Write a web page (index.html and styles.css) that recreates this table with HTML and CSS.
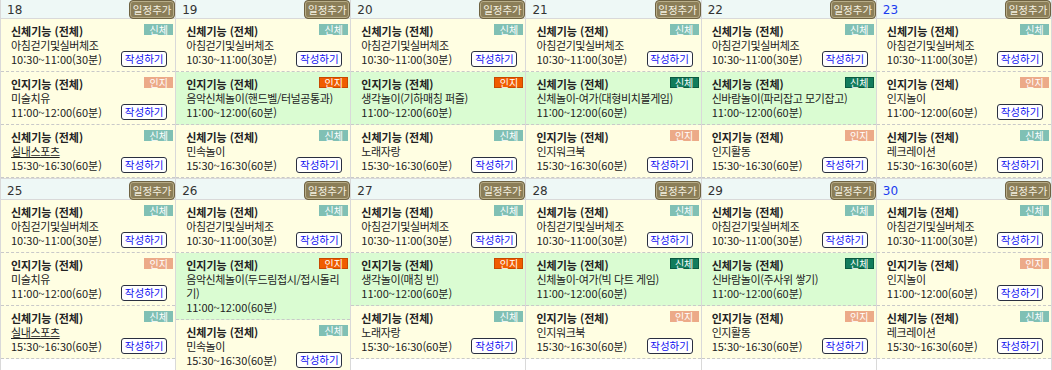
FILE: index.html
```html
<!DOCTYPE html>
<html lang="ko">
<head>
<meta charset="utf-8">
<link rel="stylesheet" href="styles.css">
</head>
<body>
<table class="cal">
<tr>
<td>
  <div class="head"><span class="num">18</span><span class="add">일정추가</span></div>
  <div class="ev"><span class="tag body">신체</span><div class="title">신체기능 (전체)</div><div class="name">아침걷기및실버체조</div><div class="time"><span>10:30~11:00(30분)</span><span class="write">작성하기</span></div></div>
  <div class="ev"><span class="tag cog">인지</span><div class="title">인지기능 (전체)</div><div class="name">미술치유</div><div class="time"><span>11:00~12:00(60분)</span><span class="write">작성하기</span></div></div>
  <div class="ev"><span class="tag body">신체</span><div class="title">신체기능 (전체)</div><div class="name u">실내스포츠</div><div class="time"><span>15:30~16:30(60분)</span><span class="write">작성하기</span></div></div>
</td>
<td>
  <div class="head"><span class="num">19</span><span class="add">일정추가</span></div>
  <div class="ev"><span class="tag body">신체</span><div class="title">신체기능 (전체)</div><div class="name">아침걷기및실버체조</div><div class="time"><span>10:30~11:00(30분)</span><span class="write">작성하기</span></div></div>
  <div class="ev done"><span class="tag cog-on">인지</span><div class="title">인지기능 (전체)</div><div class="name">음악신체놀이(핸드벨/터널공통과)</div><div class="time"><span>11:00~12:00(60분)</span></div></div>
  <div class="ev"><span class="tag body">신체</span><div class="title">신체기능 (전체)</div><div class="name">민속놀이</div><div class="time"><span>15:30~16:30(60분)</span><span class="write">작성하기</span></div></div>
</td>
<td>
  <div class="head"><span class="num">20</span><span class="add">일정추가</span></div>
  <div class="ev"><span class="tag body">신체</span><div class="title">신체기능 (전체)</div><div class="name">아침걷기및실버체조</div><div class="time"><span>10:30~11:00(30분)</span><span class="write">작성하기</span></div></div>
  <div class="ev done"><span class="tag cog-on">인지</span><div class="title">인지기능 (전체)</div><div class="name">생각놀이(기하매칭 퍼즐)</div><div class="time"><span>11:00~12:00(60분)</span></div></div>
  <div class="ev"><span class="tag body">신체</span><div class="title">신체기능 (전체)</div><div class="name">노래자랑</div><div class="time"><span>15:30~16:30(60분)</span><span class="write">작성하기</span></div></div>
</td>
<td>
  <div class="head"><span class="num">21</span><span class="add">일정추가</span></div>
  <div class="ev"><span class="tag body">신체</span><div class="title">신체기능 (전체)</div><div class="name">아침걷기및실버체조</div><div class="time"><span>10:30~11:00(30분)</span><span class="write">작성하기</span></div></div>
  <div class="ev done"><span class="tag body-on">신체</span><div class="title">신체기능 (전체)</div><div class="name">신체놀이-여가(대형비치볼게임)</div><div class="time"><span>11:00~12:00(60분)</span></div></div>
  <div class="ev"><span class="tag cog">인지</span><div class="title">인지기능 (전체)</div><div class="name">인지워크북</div><div class="time"><span>15:30~16:30(60분)</span><span class="write">작성하기</span></div></div>
</td>
<td>
  <div class="head"><span class="num">22</span><span class="add">일정추가</span></div>
  <div class="ev"><span class="tag body">신체</span><div class="title">신체기능 (전체)</div><div class="name">아침걷기및실버체조</div><div class="time"><span>10:30~11:00(30분)</span><span class="write">작성하기</span></div></div>
  <div class="ev done"><span class="tag body-on">신체</span><div class="title">신체기능 (전체)</div><div class="name">신바람놀이(파리잡고 모기잡고)</div><div class="time"><span>11:00~12:00(60분)</span></div></div>
  <div class="ev"><span class="tag cog">인지</span><div class="title">인지기능 (전체)</div><div class="name">인지활동</div><div class="time"><span>15:30~16:30(60분)</span><span class="write">작성하기</span></div></div>
</td>
<td>
  <div class="head"><span class="num sat">23</span><span class="add">일정추가</span></div>
  <div class="ev"><span class="tag body">신체</span><div class="title">신체기능 (전체)</div><div class="name">아침걷기및실버체조</div><div class="time"><span>10:30~11:00(30분)</span><span class="write">작성하기</span></div></div>
  <div class="ev"><span class="tag cog">인지</span><div class="title">인지기능 (전체)</div><div class="name">인지놀이</div><div class="time"><span>11:00~12:00(60분)</span><span class="write">작성하기</span></div></div>
  <div class="ev"><span class="tag body">신체</span><div class="title">신체기능 (전체)</div><div class="name">레크레이션</div><div class="time"><span>15:30~16:30(60분)</span><span class="write">작성하기</span></div></div>
</td>
</tr>
<tr>
<td>
  <div class="head"><span class="num">25</span><span class="add">일정추가</span></div>
  <div class="ev"><span class="tag body">신체</span><div class="title">신체기능 (전체)</div><div class="name">아침걷기및실버체조</div><div class="time"><span>10:30~11:00(30분)</span><span class="write">작성하기</span></div></div>
  <div class="ev"><span class="tag cog">인지</span><div class="title">인지기능 (전체)</div><div class="name">미술치유</div><div class="time"><span>11:00~12:00(60분)</span><span class="write">작성하기</span></div></div>
  <div class="ev"><span class="tag body">신체</span><div class="title">신체기능 (전체)</div><div class="name u">실내스포츠</div><div class="time"><span>15:30~16:30(60분)</span><span class="write">작성하기</span></div></div>
</td>
<td>
  <div class="head"><span class="num">26</span><span class="add">일정추가</span></div>
  <div class="ev"><span class="tag body">신체</span><div class="title">신체기능 (전체)</div><div class="name">아침걷기및실버체조</div><div class="time"><span>10:30~11:00(30분)</span><span class="write">작성하기</span></div></div>
  <div class="ev done"><span class="tag cog-on">인지</span><div class="title">인지기능 (전체)</div><div class="name">음악신체놀이(두드림접시/접시돌리기)</div><div class="time"><span>11:00~12:00(60분)</span></div></div>
  <div class="ev"><span class="tag body">신체</span><div class="title">신체기능 (전체)</div><div class="name">민속놀이</div><div class="time"><span>15:30~16:30(60분)</span><span class="write">작성하기</span></div></div>
</td>
<td>
  <div class="head"><span class="num">27</span><span class="add">일정추가</span></div>
  <div class="ev"><span class="tag body">신체</span><div class="title">신체기능 (전체)</div><div class="name">아침걷기및실버체조</div><div class="time"><span>10:30~11:00(30분)</span><span class="write">작성하기</span></div></div>
  <div class="ev done"><span class="tag cog-on">인지</span><div class="title">인지기능 (전체)</div><div class="name">생각놀이(매칭 빈)</div><div class="time"><span>11:00~12:00(60분)</span></div></div>
  <div class="ev"><span class="tag body">신체</span><div class="title">신체기능 (전체)</div><div class="name">노래자랑</div><div class="time"><span>15:30~16:30(60분)</span><span class="write">작성하기</span></div></div>
</td>
<td>
  <div class="head"><span class="num">28</span><span class="add">일정추가</span></div>
  <div class="ev"><span class="tag body">신체</span><div class="title">신체기능 (전체)</div><div class="name">아침걷기및실버체조</div><div class="time"><span>10:30~11:00(30분)</span><span class="write">작성하기</span></div></div>
  <div class="ev done"><span class="tag body-on">신체</span><div class="title">신체기능 (전체)</div><div class="name">신체놀이-여가(빅 다트 게임)</div><div class="time"><span>11:00~12:00(60분)</span></div></div>
  <div class="ev"><span class="tag cog">인지</span><div class="title">인지기능 (전체)</div><div class="name">인지워크북</div><div class="time"><span>15:30~16:30(60분)</span><span class="write">작성하기</span></div></div>
</td>
<td>
  <div class="head"><span class="num">29</span><span class="add">일정추가</span></div>
  <div class="ev"><span class="tag body">신체</span><div class="title">신체기능 (전체)</div><div class="name">아침걷기및실버체조</div><div class="time"><span>10:30~11:00(30분)</span><span class="write">작성하기</span></div></div>
  <div class="ev done"><span class="tag body-on">신체</span><div class="title">신체기능 (전체)</div><div class="name">신바람놀이(주사위 쌓기)</div><div class="time"><span>11:00~12:00(60분)</span></div></div>
  <div class="ev"><span class="tag cog">인지</span><div class="title">인지기능 (전체)</div><div class="name">인지활동</div><div class="time"><span>15:30~16:30(60분)</span><span class="write">작성하기</span></div></div>
</td>
<td>
  <div class="head"><span class="num sat">30</span><span class="add">일정추가</span></div>
  <div class="ev"><span class="tag body">신체</span><div class="title">신체기능 (전체)</div><div class="name">아침걷기및실버체조</div><div class="time"><span>10:30~11:00(30분)</span><span class="write">작성하기</span></div></div>
  <div class="ev"><span class="tag cog">인지</span><div class="title">인지기능 (전체)</div><div class="name">인지놀이</div><div class="time"><span>11:00~12:00(60분)</span><span class="write">작성하기</span></div></div>
  <div class="ev"><span class="tag body">신체</span><div class="title">신체기능 (전체)</div><div class="name">레크레이션</div><div class="time"><span>15:30~16:30(60분)</span><span class="write">작성하기</span></div></div>
</td>
</tr>
</table>
</body>
</html>
```

FILE: styles.css
```css
html, body {
  margin: 0;
  padding: 0;
  background: #fff;
}
body {
  font-family: "Noto Sans CJK KR", "Noto Sans", sans-serif;
  font-size: 11px;
  color: #222;
  overflow: hidden;
}
.cal {
  width: 1052px;
  table-layout: fixed;
  border-collapse: collapse;
  margin-top: -3px;
}
.cal td {
  border: 1px solid #d9d9d9;
  padding: 0;
  vertical-align: top;
}
.head {
  height: 20px;
  display: flex;
  justify-content: space-between;
  align-items: flex-start;
  background: #eef8f6;
  border-bottom: 1px solid #d9d9d9;
}
.num {
  font-family: "DejaVu Sans", sans-serif;
  font-size: 12px;
  color: #333;
  padding: 6px 0 0 6px;
  line-height: 12px;
}
.num.sat { color: #1a3cf0; }
.add {
  box-sizing: border-box;
  width: 46px;
  height: 19px;
  margin-top: 2px;
  background: #8b7e58;
  color: #f4f0e0;
  border: 1px solid #6e6242;
  box-shadow: inset 0 0 0 1px #b8ad88;
  border-radius: 4px;
  font-size: 10.5px;
  line-height: 17px;
  text-align: center;
}
.ev {
  position: relative;
  padding: 5px 8px 4px 10px;
  background: #fffee2;
  border-bottom: 1px dashed #c9c9c9;
  line-height: 14px;
}
.ev.done { background: #dafcd2; }
.title { font-weight: bold; }
.name { letter-spacing: -0.4px; }
.name.u { text-decoration: underline; }
.time {
  display: flex;
  justify-content: space-between;
  align-items: center;
  height: 14px;
  margin-bottom: 1px;
}
.write {
  box-sizing: border-box;
  width: 46px;
  height: 16px;
  border: 1px solid #2a2f40;
  border-radius: 3px;
  background: #fff;
  color: #1010f0;
  font-size: 10.5px;
  line-height: 14px;
  text-align: center;
}
.tag {
  position: absolute;
  top: 5px;
  right: 2px;
  box-sizing: border-box;
  width: 29px;
  height: 11px;
  font-size: 10px;
  line-height: 11px;
  color: #fff;
  text-align: center;
}
.tag.body { background: #80c0b4; }
.tag.cog { background: #ecaa88; }
.tag.cog-on { background: #f05c00; border: 1px solid #c84800; line-height: 9px; }
.tag.body-on { background: #127c5c; border: 1px solid #0a5a40; line-height: 9px; }
```
